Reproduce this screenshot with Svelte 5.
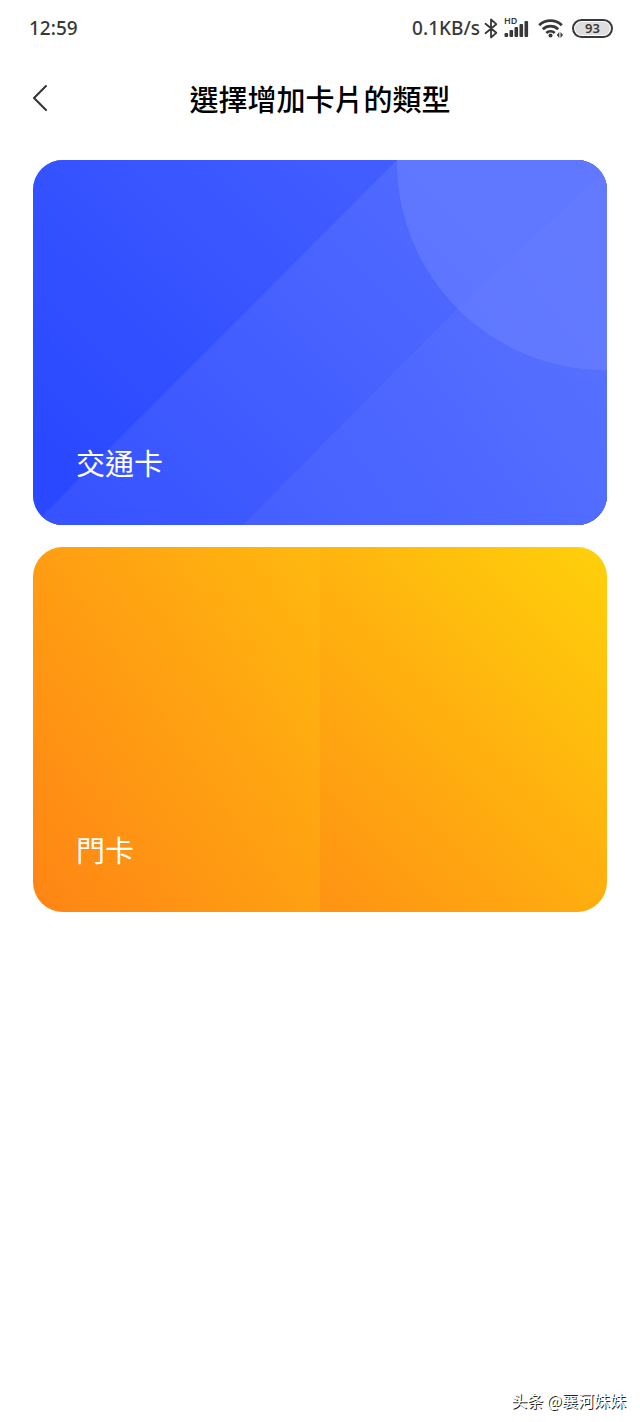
<script lang="ts">
  const speed = '0.1KB/s';
  const battery = 93;

  // heights of the five signal bars, weakest first
  const bars = [4, 7, 10, 13, 16];
</script>

<div class="screen">
  <div class="status">
    <span class="time">12:59</span>
    <div class="indicators">
      <span class="speed">{speed}</span>
      <svg class="bluetooth" width="14" height="22" viewBox="0 0 14 22" aria-hidden="true">
        <path d="M1.5 6.8 12.3 15.8 7 20.5V2.5l5.3 4.7L1.5 16.2" />
      </svg>
      <div class="signal">
        <span class="hd">HD</span>
        <svg width="26" height="20" viewBox="0 0 26 20" aria-hidden="true">
          {#each bars as h, i}
            <rect x={0.5 + i * 5} y={19 - h} width="3.6" height={h} rx="1" />
          {/each}
        </svg>
      </div>
      <svg class="wifi" width="26" height="20" viewBox="0 0 26 20" aria-hidden="true">
        <path class="arc" d="M1.2 7.2a16.3 16.3 0 0 1 22.6 0M4.8 11.2a11.2 11.2 0 0 1 15.4 0M8.3 15a6.2 6.2 0 0 1 8.4 0" />
        <circle cx="12.5" cy="17.6" r="2" />
        <path d="M21.3 14v6l-2.5-3zM22.5 14v6l2.5-3z" />
      </svg>
      <span class="battery"><span class="level">{battery}</span></span>
    </div>
  </div>

  <header>
    <button class="back" aria-label="返回">
      <svg width="18" height="28" viewBox="0 0 18 28" aria-hidden="true">
        <path d="M15 2 3 14l12 12" />
      </svg>
    </button>
    <h1>選擇增加卡片的類型</h1>
  </header>

  <main>
    <button class="card transit">
      <svg class="art" viewBox="0 0 574 365" preserveAspectRatio="none" aria-hidden="true">
        <defs>
          <linearGradient id="base" gradientUnits="userSpaceOnUse" x1="0" y1="300" x2="300" y2="0">
            <stop offset="0" stop-color="#2948ff" />
            <stop offset="1" stop-color="#415cff" />
          </linearGradient>
          <linearGradient id="band" gradientUnits="userSpaceOnUse" x1="60" y1="364" x2="424" y2="0">
            <stop offset="0" stop-color="#3653ff" />
            <stop offset="1" stop-color="#526cff" />
          </linearGradient>
          <linearGradient id="corner" gradientUnits="userSpaceOnUse" x1="240" y1="364" x2="574" y2="120">
            <stop offset="0" stop-color="#4560ff" />
            <stop offset="1" stop-color="#5872ff" />
          </linearGradient>
        </defs>
        <path fill="url(#base)" d="M0 0h574v365H0z" />
        <path fill="url(#band)" d="M364 0h210v365H0z" />
        <path fill="url(#corner)" d="M574 32v333H210L420 153l154-144z" />
        <circle cx="572" cy="2" r="208" fill="#6a80ff" fill-opacity=".6" />
      </svg>
      <span class="name">交通卡</span>
    </button>

    <button class="card door">
      <span class="name">門卡</span>
    </button>
  </main>

  <footer>头条 @襄河妹妹</footer>
</div>

<style>
  :global(body) {
    margin: 0;
    background: #fff;
  }

  .screen {
    display: flex;
    flex-direction: column;
    box-sizing: border-box;
    min-height: 100vh;
    font-family: 'Noto Sans CJK TC', sans-serif;
    color: #000;
  }

  .status {
    display: flex;
    align-items: center;
    justify-content: space-between;
    height: 56px;
    padding: 0 27px 0 29px;
    font-family: 'Noto Sans', sans-serif;
    font-size: 19px;
    font-weight: 500;
    color: #38383a;
  }

  .indicators {
    display: flex;
    align-items: center;
  }

  .speed {
    margin-right: 4px;
  }

  .bluetooth {
    margin-right: 6px;
    fill: none;
    stroke: #38383a;
    stroke-width: 1.8;
    stroke-linejoin: round;
    stroke-linecap: round;
  }

  .signal {
    position: relative;
    display: flex;
    margin-right: 8px;
  }

  .signal svg,
  .wifi {
    fill: #38383a;
  }

  .hd {
    position: absolute;
    top: -2px;
    left: 0;
    font-size: 9px;
    line-height: 10px;
    font-weight: 600;
  }

  .wifi {
    margin-right: 8px;
  }

  .arc {
    fill: none;
    stroke: #38383a;
    stroke-width: 2.8;
  }

  .battery {
    display: flex;
    box-sizing: border-box;
    width: 41px;
    height: 19px;
    padding: 1px;
    border: 2px solid #38383a;
    border-radius: 10px;
  }

  .level {
    flex: 1;
    border-radius: 7px;
    background: #dedede;
    font-size: 13px;
    line-height: 13px;
    font-weight: 600;
    text-align: center;
  }

  header {
    display: grid;
    grid-template-columns: 48px 1fr 48px;
    align-items: center;
    height: 84px;
    padding: 0 16px;
  }

  .back {
    display: flex;
    justify-content: center;
    padding: 0;
    border: 0;
    background: none;
  }

  .back path {
    fill: none;
    stroke: #333;
    stroke-width: 2;
    stroke-linecap: round;
    stroke-linejoin: round;
  }

  h1 {
    margin: 0;
    font-size: 29px;
    line-height: 40px;
    font-weight: 500;
    text-align: center;
  }

  main {
    display: flex;
    flex-direction: column;
    gap: 22px;
    padding: 20px 33px 32px;
  }

  .card {
    position: relative;
    display: flex;
    align-items: flex-end;
    width: 100%;
    aspect-ratio: 574 / 365;
    padding: 0 43px 41px;
    border: 0;
    border-radius: 30px;
    overflow: hidden;
    font: inherit;
    color: #fff;
    text-align: left;
  }

  .transit {
    background: #4560ff;
  }

  /* two leaves of the door, each with its own gradient */
  .door {
    background:
      linear-gradient(55deg, #ff8415, #ffb90f) left / 50% 100% no-repeat,
      linear-gradient(45deg, #ff9214, #ffd00a) right / 50% 100% no-repeat;
  }

  .art {
    position: absolute;
    inset: 0;
    width: 100%;
    height: 100%;
  }

  .name {
    position: relative;
    font-size: 29px;
    line-height: 44px;
  }

  footer {
    margin-top: auto;
    padding: 0 14px 10px;
    font-family: 'Noto Sans CJK SC', sans-serif;
    font-size: 16px;
    line-height: 24px;
    text-align: right;
    color: #fff;
    text-shadow: 1px 1px 0 #222;
  }
</style>
